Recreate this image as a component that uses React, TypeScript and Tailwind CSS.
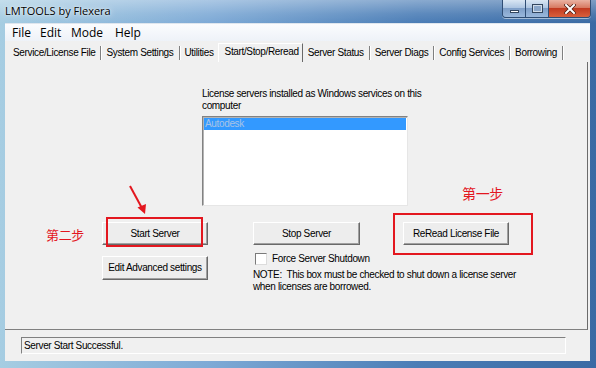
import React from 'react';

const ui = "font-['Liberation_Sans',Arial,sans-serif] text-[10px] leading-[12px] tracking-[-0.35px] text-black";

const tabs = [
  'Service/License File',
  'System Settings',
  'Utilities',
  'Start/Stop/Reread',
  'Server Status',
  'Server Diags',
  'Config Services',
  'Borrowing',
];

const menu = [
  { label: 'File', w: 'w-[28px]' },
  { label: 'Edit', w: 'w-[31px]' },
  { label: 'Mode', w: 'w-[44px]' },
  { label: 'Help', w: 'w-[30px]' },
];

const WinButton = ({ label, className = '' }: { label: string; className?: string }) => (
  <div
    className={`flex h-[23px] w-[106px] items-center justify-center whitespace-nowrap border border-t-white border-l-white border-r-[#696969] border-b-[#696969] bg-[#ededed] shadow-[inset_-1px_-1px_0_#a0a0a0] ${className}`}
  >
    {label}
  </div>
);

const CaptionButtons = () => (
  <div className="flex h-[18px] overflow-hidden rounded-b-[4px] border border-t-0 border-[#2f4d74] shadow-[0_1px_0_rgba(255,255,255,0.5)]">
    <div className="flex w-[23px] items-center justify-center border-r border-[#2f4d74] bg-[linear-gradient(180deg,#d9e6f3_0%,#aec6e2_45%,#7f9fc8_50%,#9ab8dc_100%)]">
      <div className="mt-[5px] h-[3px] w-[9px] border border-[#33465f] bg-white" />
    </div>
    <div className="flex w-[23px] items-center justify-center border-r border-[#2f4d74] bg-[linear-gradient(180deg,#d9e6f3_0%,#aec6e2_45%,#7f9fc8_50%,#9ab8dc_100%)]">
      <div className="h-[7px] w-[9px] border border-[#cfdbe8] bg-[#8aa6c9] shadow-[0_0_0_1px_#33465f]" />
    </div>
    <div className="flex w-[41px] items-center justify-center bg-[linear-gradient(180deg,#eab2a2_0%,#d77a62_45%,#c23a20_50%,#d9603c_100%)]">
      <svg width="12" height="10" viewBox="0 0 12 10">
        <path d="M2 1 L10 9 M10 1 L2 9" stroke="#4a1a10" strokeWidth="3.4" strokeLinecap="square" />
        <path d="M2 1 L10 9 M10 1 L2 9" stroke="#ffffff" strokeWidth="2" strokeLinecap="square" />
      </svg>
    </div>
  </div>
);

export default function App() {
  return (
    <div className="relative h-[368px] w-[596px] overflow-hidden bg-[linear-gradient(90deg,#a6cde2_0%,#7eaad6_35%,#4b7db6_70%,#3a6aa4_100%)]">
      {/* title bar */}
      <div className="flex h-[23px] items-start justify-between bg-[linear-gradient(180deg,rgba(255,255,255,0.35)_0%,rgba(255,255,255,0.1)_60%,rgba(255,255,255,0)_100%)] pl-[5px] pr-[5px]">
        <span className="mt-[3px] font-['Open_Sans',sans-serif] text-[11px] leading-[16px] text-black [text-shadow:0_0_6px_rgba(255,255,255,0.9),0_0_2px_rgba(255,255,255,0.9)]">
          LMTOOLS by Flexera
        </span>
        <CaptionButtons />
      </div>

      {/* client area */}
      <div className="ml-[5px] mr-[6px] flex h-[338px] flex-col bg-[#f0f0f0]">
        <div className="flex h-[18px] items-center border-t border-[#dfe6ee] bg-[linear-gradient(180deg,#fbfcfe_0%,#eef2f8_100%)] pl-[7px] font-['Open_Sans',sans-serif] text-[12px] text-black">
          {menu.map((m) => (
            <span key={m.label} className={m.w}>
              {m.label}
            </span>
          ))}
        </div>

        <div className={`flex h-[21px] items-end whitespace-nowrap pl-[1px] ${ui}`}>
          {tabs.map((t, i) =>
            i === 3 ? (
              <div
                key={t}
                className="flex h-[19px] shrink-0 items-start border-t border-l border-r border-t-white border-l-white border-r-[#696969] bg-[#f0f0f0] pl-[6px] pr-[3px] pt-[2px]"
              >
                {t}
              </div>
            ) : (
              <div
                key={t}
                className={`mb-[2px] flex h-[14px] shrink-0 items-center ${i === 0 ? 'pl-[7px]' : 'pl-[5px]'} ${i === 2 ? 'pr-[4px]' : 'pr-[5px] border-r border-[#808080] shadow-[1px_0_0_white]'}`}
              >
                {t}
              </div>
            ),
          )}
        </div>

        {/* tab page */}
        <div className={`relative mr-[2px] flex-1 border-r border-b border-r-[#6b6b6b] border-b-[#808080] pt-[26px] ${ui}`}>
          <div className="ml-[197px] w-[232px]">
            <p>License servers installed as Windows services on this computer</p>
            <div className="mt-[4px] h-[90px] w-[206px] border border-t-[#828282] border-l-[#828282] border-r-[#e6e6e6] border-b-[#e6e6e6] bg-white p-px shadow-[inset_1px_1px_0_#b4b4b4]">
              <div className="h-[12px] bg-[#3399ff] pl-px text-[#a8c3e6]">Autodesk</div>
            </div>
          </div>

          <div className="mt-[16px] flex items-start">
            <div className="ml-[97px] flex w-[106px] flex-col gap-[11px]">
              <WinButton label="Start Server" />
              <WinButton label="Edit Advanced settings" className="h-[24px]" />
            </div>
            <div className="ml-[45px] w-[150px]">
              <WinButton label="Stop Server" className="w-[107px]" />
              <div className="mt-[8px] flex items-center gap-[5px] pl-[2px]">
                <div className="h-[12px] w-[12px] border border-t-[#7a7a7a] border-l-[#7a7a7a] border-r-[#dcdcdc] border-b-[#dcdcdc] bg-white" />
                <span>Force Server Shutdown</span>
              </div>
              <p className="mt-[4px] whitespace-nowrap">
                NOTE:&nbsp; This box must be checked to shut down a license server
                <br />
                when licenses are borrowed.
              </p>
            </div>
            <WinButton label="ReRead License File" />
          </div>

          {/* annotations */}
          <svg className="absolute left-[118px] top-[120px]" width="32" height="34" viewBox="0 0 32 34">
            <path d="M7 4 L20 28" stroke="#e3171f" strokeWidth="2" />
            <path d="M22 32 L14.5 25.5 L23 22 Z" fill="#e3171f" />
          </svg>
          <div className="absolute left-[101px] top-[155px] h-[30px] w-[97px] border-2 border-[#e3171f]" />
          <div className="absolute left-[388px] top-[151px] h-[42px] w-[140px] border-2 border-[#e3171f]" />
          <span className="absolute left-[41px] top-[165px] font-['Noto_Sans_CJK_SC',sans-serif] text-[13px] leading-[16px] text-[#e3171f]">
            第二步
          </span>
          <span className="absolute left-[457px] top-[123px] font-['Noto_Sans_CJK_SC',sans-serif] text-[14px] leading-[16px] text-[#e3171f]">
            第一步
          </span>
        </div>

        {/* status bar */}
        <div className={`h-[31px] pl-[16px] pt-[7px] ${ui}`}>
          <div className="h-[17px] w-[545px] border border-t-[#808080] border-l-[#808080] border-r-white border-b-white pl-[2px] pt-[2px]">
            Server Start Successful.
          </div>
        </div>
      </div>
    </div>
  );
}
